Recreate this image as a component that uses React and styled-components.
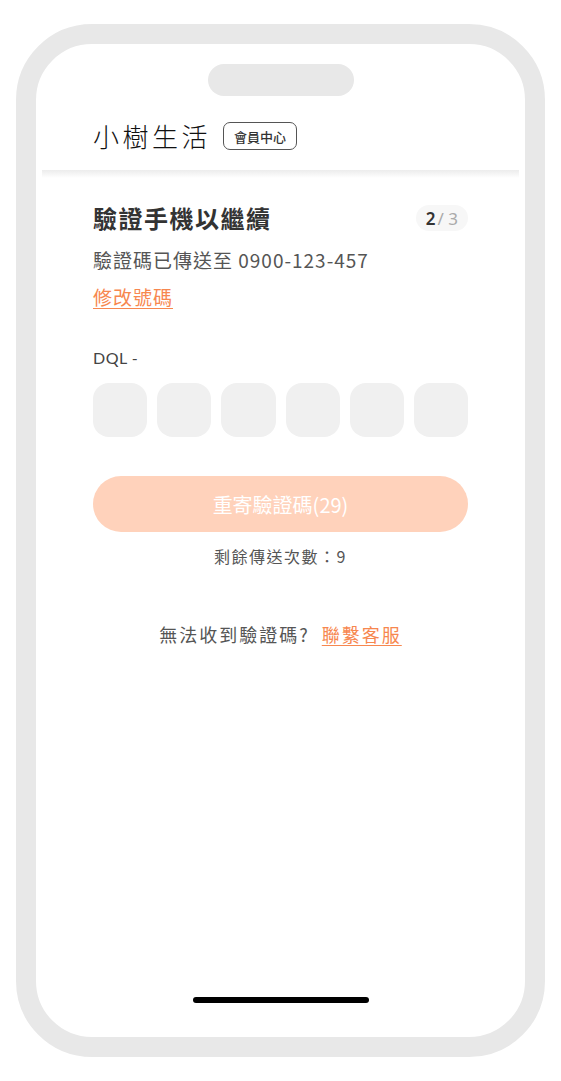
import React from "react"
import styled, { createGlobalStyle } from "styled-components"

const GlobalStyle = createGlobalStyle`
  html, body {
    margin: 0;
    padding: 0;
    background: #fff;
  }
  body {
    font-family: "Noto Sans CJK TC", "Noto Sans", sans-serif;
    color: #333;
  }
`

const Phone = styled.div`
  box-sizing: border-box;
  width: 529px;
  height: 1033px;
  margin: 24px 0 0 16px;
  border: 20px solid #e8e8e8;
  border-radius: 76px;
  background: #fff;
  display: flex;
  flex-direction: column;
  overflow: hidden;
`

const Notch = styled.div`
  align-self: center;
  width: 146px;
  height: 32px;
  margin-top: 20px;
  border-radius: 16px;
  background: #e8e8e8;
`

const Header = styled.header`
  display: flex;
  align-items: center;
  gap: 12px;
  height: 68px;
  padding: 6px 57px 0;
`

const Brand = styled.h1`
  margin: 0;
  font-size: 26px;
  font-weight: 300;
  letter-spacing: 3.5px;
  color: #111;
  line-height: 1;
`

const Badge = styled.span`
  box-sizing: border-box;
  height: 28px;
  padding: 0 10px;
  display: inline-flex;
  align-items: center;
  border: 1px solid #555;
  border-radius: 7px;
  font-size: 13px;
  font-weight: 500;
  color: #333;
`

const Divider = styled.div`
  height: 8px;
  margin: 0 6px;
  background: linear-gradient(to bottom, #ececec, rgba(255, 255, 255, 0));
`

const Content = styled.main`
  flex: 1;
  padding: 24px 57px 0;
  display: flex;
  flex-direction: column;
`

const TitleRow = styled.div`
  display: flex;
  align-items: center;
  justify-content: space-between;
`

const Title = styled.h2`
  margin: 0;
  font-size: 24px;
  font-weight: 700;
  letter-spacing: 1.5px;
  line-height: 32px;
  color: #333;
`

const Step = styled.span`
  height: 26px;
  padding: 0 10px;
  display: inline-flex;
  align-items: center;
  border-radius: 13px;
  background: #f7f7f7;
  font-family: "Noto Sans", sans-serif;
  font-size: 17px;
  font-weight: 600;
  color: #333;
`

const StepTotal = styled.span`
  color: #aaa;
  font-weight: 400;
  margin-left: 2px;
`

const Sub = styled.p`
  margin: 12px 0 0;
  font-size: 19px;
  line-height: 28px;
  letter-spacing: 1px;
  color: #555;
`

const OrangeLink = styled.a`
  color: #f7874f;
  text-decoration: underline;
  text-underline-offset: 3px;
  font-size: ${(p) => p.size || 19}px;
  letter-spacing: ${(p) => p.spacing || 1}px;
  cursor: pointer;
`

const EditLink = styled.div`
  margin-top: 9px;
  line-height: 28px;
`

const Prefix = styled.div`
  margin-top: 36px;
  font-family: "Lato", "Noto Sans", sans-serif;
  font-size: 16px;
  color: #444;
  letter-spacing: 0.5px;
`

const CodeGrid = styled.div`
  margin-top: 16px;
  display: grid;
  grid-template-columns: repeat(6, 1fr);
  gap: 10px;
`

const CodeCell = styled.div`
  height: 54px;
  border-radius: 16px;
  background: #f0f0f0;
`

const ResendButton = styled.button`
  margin-top: 39px;
  height: 56px;
  border: none;
  border-radius: 28px;
  background: #ffd2bb;
  color: #fff;
  font-family: "Noto Sans CJK TC", "Noto Sans", sans-serif;
  font-size: 20px;
  font-weight: 400;
`

const Remaining = styled.p`
  margin: 12px 0 0;
  text-align: center;
  font-size: 16px;
  letter-spacing: 1.5px;
  color: #555;
`

const Help = styled.p`
  margin: 53px 0 0;
  text-align: center;
  font-size: 18px;
  letter-spacing: 2px;
  color: #555;
`

const HelpGap = styled.span`
  display: inline-block;
  width: 12px;
`

const HomeBar = styled.div`
  align-self: center;
  width: 176px;
  height: 6px;
  margin-bottom: 34px;
  border-radius: 3px;
  background: #000;
`

export default function App() {
  return (
    <>
      <GlobalStyle />
      <Phone>
        <Notch />
        <Header>
          <Brand>小樹生活</Brand>
          <Badge>會員中心</Badge>
        </Header>
        <Divider />
        <Content>
          <TitleRow>
            <Title>驗證手機以繼續</Title>
            <Step>
              2<StepTotal>/ 3</StepTotal>
            </Step>
          </TitleRow>
          <Sub>驗證碼已傳送至 0900-123-457</Sub>
          <EditLink>
            <OrangeLink>修改號碼</OrangeLink>
          </EditLink>
          <Prefix>DQL -</Prefix>
          <CodeGrid>
            {[0, 1, 2, 3, 4, 5].map((i) => (
              <CodeCell key={i} />
            ))}
          </CodeGrid>
          <ResendButton disabled>重寄驗證碼(29)</ResendButton>
          <Remaining>剩餘傳送次數：9</Remaining>
          <Help>
            無法收到驗證碼?
            <HelpGap />
            <OrangeLink size={18} spacing={2}>聯繫客服</OrangeLink>
          </Help>
        </Content>
        <HomeBar />
      </Phone>
    </>
  )
}
